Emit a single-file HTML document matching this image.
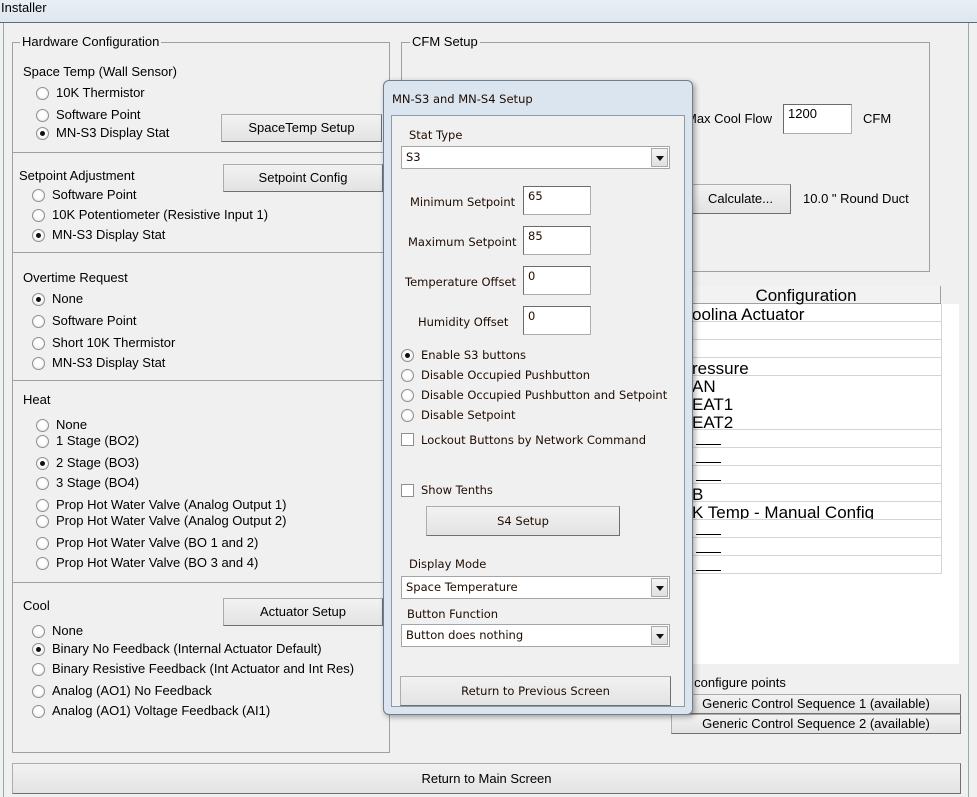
<!DOCTYPE html>
<html><head><meta charset="utf-8">
<style>
*{margin:0;padding:0;box-sizing:border-box}
body{width:977px;height:797px;background:#f0f0f0;position:relative;overflow:hidden;font-family:"Liberation Sans",sans-serif;font-size:13px;color:#000}
.a{position:absolute;white-space:nowrap;line-height:16px}
.r{position:absolute;width:13px;height:13px;border-radius:50%;border:1px solid #8e8f8f;background:radial-gradient(circle at 50% 45%,#fff 40%,#dcdcdc 100%)}
.r.on::after{content:"";position:absolute;left:3px;top:3px;width:5px;height:5px;border-radius:50%;background:#111}
.cb{position:absolute;width:13px;height:13px;border:1px solid #8e8f8f;background:#fff}
.btn{position:absolute;background:linear-gradient(#f2f2f2,#e3e3e3);border:1px solid #adadad;border-right-color:#707070;border-bottom-color:#707070;text-align:center;white-space:nowrap}
.gb{position:absolute;border:1px solid #a0a0a0}
.hl{position:absolute;height:1px;background:#a0a0a0}
.d{font-family:"DejaVu Sans","Liberation Sans",sans-serif;font-size:11.5px;color:#1f0c00}
.inp{position:absolute;background:#fff;border:1px solid #abadb3;border-top-color:#6b6b6b;border-left-color:#6b6b6b;padding:1px 4px;line-height:16px}
.sel{position:absolute;background:#fff;border:1px solid #a5a5a5;padding-left:4px}
.sel .ar{position:absolute;right:1px;top:1px;bottom:1px;width:17px;background:linear-gradient(#f4f4f4,#e0e0e0);border:1px solid #a9a9a9}
.sel .ar::after{content:"";position:absolute;left:4px;top:7px;border-left:4px solid transparent;border-right:4px solid transparent;border-top:5px solid #111}
.row{position:absolute;left:692px;width:249px;height:18px;border-bottom:1px solid #d4d4d4;font-size:17px;line-height:21px;overflow:hidden}
.u::after{content:"";position:absolute;left:4px;top:14px;width:25px;height:1px;background:#000}
</style></head><body>
<div style="position:absolute;left:0;top:0;width:977px;height:23px;background:linear-gradient(#e9eef4,#dde6ef)"></div>
<div style="position:absolute;left:0;top:22px;width:977px;height:1px;background:#5e6a78"></div>
<div class="a" style="left:1px;top:0;font-size:13px;line-height:16px">Installer</div>
<div style="position:absolute;left:3px;top:23px;width:1px;height:774px;background:#9aa"></div>
<div style="position:absolute;left:968px;top:23px;width:1px;height:774px;background:#9aa"></div>

<div class="gb" style="left:12px;top:42px;width:378px;height:711px"></div>
<div class="a" style="left:20px;top:34px;background:#f0f0f0;padding:0 2px">Hardware Configuration</div>
<div class="hl" style="left:12px;top:152px;width:378px"></div>
<div class="hl" style="left:12px;top:252px;width:378px"></div>
<div class="hl" style="left:12px;top:380px;width:378px"></div>
<div class="hl" style="left:12px;top:582px;width:378px"></div>

<div class="a" style="left:23px;top:64px">Space Temp (Wall Sensor)</div>
<div class="r" style="left:36px;top:87px"></div><div class="a" style="left:56px;top:85px">10K Thermistor</div>
<div class="r" style="left:36px;top:109px"></div><div class="a" style="left:56px;top:107px">Software Point</div>
<div class="r on" style="left:36px;top:127px"></div><div class="a" style="left:56px;top:125px">MN-S3 Display Stat</div>
<div class="btn" style="left:221px;top:114px;width:161px;height:28px;line-height:26px">SpaceTemp Setup</div>

<div class="a" style="left:19px;top:168px">Setpoint Adjustment</div>
<div class="btn" style="left:223px;top:164px;width:160px;height:28px;line-height:26px">Setpoint Config</div>
<div class="r" style="left:32px;top:189px"></div><div class="a" style="left:52px;top:187px">Software Point</div>
<div class="r" style="left:32px;top:209px"></div><div class="a" style="left:52px;top:207px">10K Potentiometer (Resistive Input 1)</div>
<div class="r on" style="left:32px;top:229px"></div><div class="a" style="left:52px;top:227px">MN-S3 Display Stat</div>

<div class="a" style="left:23px;top:270px">Overtime Request</div>
<div class="r on" style="left:32px;top:293px"></div><div class="a" style="left:52px;top:291px">None</div>
<div class="r" style="left:32px;top:315px"></div><div class="a" style="left:52px;top:313px">Software Point</div>
<div class="r" style="left:32px;top:337px"></div><div class="a" style="left:52px;top:335px">Short 10K Thermistor</div>
<div class="r" style="left:32px;top:357px"></div><div class="a" style="left:52px;top:355px">MN-S3 Display Stat</div>

<div class="a" style="left:23px;top:392px">Heat</div>
<div class="r" style="left:36px;top:419px"></div><div class="a" style="left:56px;top:417px">None</div>
<div class="r" style="left:36px;top:435px"></div><div class="a" style="left:56px;top:433px">1 Stage (BO2)</div>
<div class="r on" style="left:36px;top:457px"></div><div class="a" style="left:56px;top:455px">2 Stage (BO3)</div>
<div class="r" style="left:36px;top:477px"></div><div class="a" style="left:56px;top:475px">3 Stage (BO4)</div>
<div class="r" style="left:36px;top:499px"></div><div class="a" style="left:56px;top:497px">Prop Hot Water Valve (Analog Output 1)</div>
<div class="r" style="left:36px;top:515px"></div><div class="a" style="left:56px;top:513px">Prop Hot Water Valve (Analog Output 2)</div>
<div class="r" style="left:36px;top:537px"></div><div class="a" style="left:56px;top:535px">Prop Hot Water Valve (BO 1 and 2)</div>
<div class="r" style="left:36px;top:557px"></div><div class="a" style="left:56px;top:555px">Prop Hot Water Valve (BO 3 and 4)</div>

<div class="a" style="left:23px;top:598px">Cool</div>
<div class="btn" style="left:223px;top:598px;width:160px;height:28px;line-height:26px">Actuator Setup</div>
<div class="r" style="left:32px;top:625px"></div><div class="a" style="left:52px;top:623px">None</div>
<div class="r on" style="left:32px;top:643px"></div><div class="a" style="left:52px;top:641px">Binary No Feedback (Internal Actuator Default)</div>
<div class="r" style="left:32px;top:663px"></div><div class="a" style="left:52px;top:661px">Binary Resistive Feedback (Int Actuator and Int Res)</div>
<div class="r" style="left:32px;top:685px"></div><div class="a" style="left:52px;top:683px">Analog (AO1) No Feedback</div>
<div class="r" style="left:32px;top:705px"></div><div class="a" style="left:52px;top:703px">Analog (AO1) Voltage Feedback (AI1)</div>

<div class="gb" style="left:401px;top:42px;width:529px;height:230px"></div>
<div class="a" style="left:410px;top:34px;background:#f0f0f0;padding:0 2px">CFM Setup</div>
<div class="a" style="left:686px;top:111px">Max Cool Flow</div>
<div class="inp" style="left:783px;top:104px;width:69px;height:30px">1200</div>
<div class="a" style="left:863px;top:111px">CFM</div>
<div class="btn" style="left:690px;top:184px;width:101px;height:30px;line-height:28px">Calculate...</div>
<div class="a" style="left:803px;top:191px">10.0 " Round Duct</div>

<div style="position:absolute;left:692px;top:286px;width:267px;height:378px;background:#fff"></div>
<div style="position:absolute;left:692px;top:286px;width:267px;height:18px;background:#f0f0f0"></div>
<div style="position:absolute;left:672px;top:286px;width:269px;height:18px;background:#f2f2f2;border:1px solid #a0a0a0;border-top:none;border-left:none;text-align:center;font-size:17px;line-height:19px">Configuration</div>
<div style="position:absolute;left:941px;top:304px;width:1px;height:270px;background:#d4d4d4"></div>
<div class="row" style="top:304px">oolina Actuator</div>
<div class="row" style="top:322px"></div>
<div class="row" style="top:340px"></div>
<div class="row" style="top:358px">ressure</div>
<div class="row" style="top:376px;border:none">AN</div>
<div class="row" style="top:394px;border:none">EAT1</div>
<div class="row" style="top:412px">EAT2</div>
<div class="row u" style="top:430px"></div>
<div class="row u" style="top:448px"></div>
<div class="row u" style="top:466px"></div>
<div class="row" style="top:484px">B</div>
<div class="row" style="top:502px">K Temp - Manual Config</div>
<div class="row u" style="top:520px"></div>
<div class="row u" style="top:538px"></div>
<div class="row u" style="top:556px"></div>

<div class="a" style="left:684px;top:675px">y configure points</div>
<div class="btn" style="left:671px;top:694px;width:290px;height:20px;line-height:18px">Generic Control Sequence 1 (available)</div>
<div class="btn" style="left:671px;top:714px;width:290px;height:20px;line-height:18px">Generic Control Sequence 2 (available)</div>

<div class="btn" style="left:12px;top:763px;width:949px;height:31px;line-height:29px">Return to Main Screen</div>

<div style="position:absolute;left:383px;top:80px;width:310px;height:635px;border-radius:6px;background:#dbe5ef;border:1px solid #6f7d8c;box-shadow:2px 2px 6px rgba(0,0,0,.35)"></div>
<div class="a d" style="left:392px;top:91px">MN-S3 and MN-S4 Setup</div>
<div style="position:absolute;left:391px;top:115px;width:294px;height:592px;background:#f0f0f0;border:1px solid #8f9aa6"></div>
<div class="a d" style="left:409px;top:127px">Stat Type</div>
<div class="sel d" style="left:401px;top:146px;width:269px;height:23px;line-height:21px">S3<div class="ar"></div></div>
<div class="a d" style="left:410px;top:194px">Minimum Setpoint</div>
<div class="inp d" style="left:523px;top:186px;width:68px;height:29px">65</div>
<div class="a d" style="left:408px;top:234px">Maximum Setpoint</div>
<div class="inp d" style="left:523px;top:226px;width:68px;height:29px">85</div>
<div class="a d" style="left:405px;top:274px">Temperature Offset</div>
<div class="inp d" style="left:523px;top:266px;width:68px;height:29px">0</div>
<div class="a d" style="left:418px;top:314px">Humidity Offset</div>
<div class="inp d" style="left:523px;top:306px;width:68px;height:29px">0</div>
<div class="r on" style="left:401px;top:349px"></div><div class="a d" style="left:421px;top:347px">Enable S3 buttons</div>
<div class="r" style="left:401px;top:369px"></div><div class="a d" style="left:421px;top:367px">Disable Occupied Pushbutton</div>
<div class="r" style="left:401px;top:389px"></div><div class="a d" style="left:421px;top:387px">Disable Occupied Pushbutton and Setpoint</div>
<div class="r" style="left:401px;top:409px"></div><div class="a d" style="left:421px;top:407px">Disable Setpoint</div>
<div class="cb" style="left:401px;top:433px"></div><div class="a d" style="left:421px;top:432px">Lockout Buttons by Network Command</div>
<div class="cb" style="left:401px;top:484px"></div><div class="a d" style="left:421px;top:482px">Show Tenths</div>
<div class="btn d" style="left:426px;top:506px;width:194px;height:30px;line-height:28px">S4 Setup</div>
<div class="a d" style="left:409px;top:556px">Display Mode</div>
<div class="sel d" style="left:401px;top:576px;width:269px;height:23px;line-height:21px">Space Temperature<div class="ar"></div></div>
<div class="a d" style="left:407px;top:606px">Button Function</div>
<div class="sel d" style="left:401px;top:624px;width:269px;height:23px;line-height:21px">Button does nothing<div class="ar"></div></div>
<div class="btn d" style="left:400px;top:676px;width:271px;height:30px;line-height:28px">Return to Previous Screen</div>
</body></html>
